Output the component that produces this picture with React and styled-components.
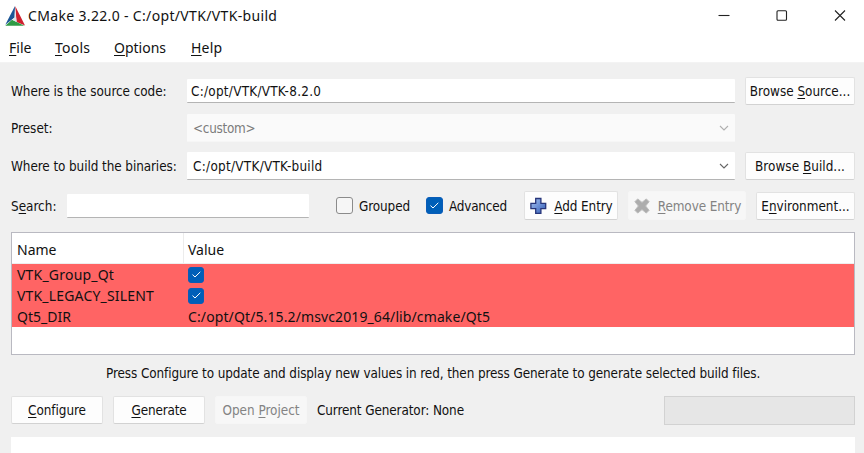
import React from 'react';
import styled, { createGlobalStyle } from 'styled-components';

const Global = createGlobalStyle`
  * { box-sizing: border-box; }
  body { margin: 0; overflow: hidden; background: #f0f0f0; }
`;

const tahoma = '13.4px "DejaVu Sans Condensed", "DejaVu Sans", sans-serif';
const segoe = '14px "Noto Sans", sans-serif';

const Window = styled.div`
  width: 864px;
  height: 453px;
  display: flex;
  flex-direction: column;
  overflow: hidden;
  background: #f0f0f0;
  color: #111;
  font: ${tahoma};
  white-space: nowrap;
`;
const Label = styled.span`
  display: inline-block;
  vertical-align: top;
  padding-top: 2px;
  letter-spacing: ${(p) => p.$ls || 0}px;
  line-height: 18px;
`;
const Mnemonic = styled.span`
  text-decoration: underline;
  text-decoration-thickness: 1px;
  text-underline-offset: 2px;
  text-decoration-skip-ink: none;
`;
const Header = styled.header`
  flex: none;
  height: 63px;
  background: #fff;
  border-bottom: 1px solid #f3f3f3;
  font: ${segoe};
  ${Label} { padding-top: 0; }
`;
const TitleBar = styled.div`
  display: flex;
  align-items: center;
  height: 31px;
  padding-left: 5px;
`;
const Title = styled.div`
  flex: 1;
  display: flex;
  align-items: center;
  gap: 3px;
`;
const WindowButtons = styled.div`
  display: flex;
  width: 169px;
`;
const WindowButton = styled.button`
  flex: none;
  width: 58px;
  height: 30px;
  padding: 0;
  border: 0;
  background: none;
  display: grid;
  place-items: center;
`;
const MenuBar = styled.nav`
  display: flex;
  align-items: center;
  height: 31px;
  padding: 3px 0 0 9px;
`;
const MenuItem = styled.div`
  width: ${(p) => p.$w}px;
`;
const Main = styled.main`
  flex: 1;
  padding: 14px 9px 0 11px;
  display: flex;
  flex-direction: column;
`;
const PathRow = styled.div`
  display: grid;
  grid-template-columns: 176px 548px 110px;
  align-items: center;
  height: 28px;
  margin-bottom: ${(p) => p.$mb}px;
  & > button { margin-left: 10px; }
`;
const Field = styled.div`
  flex: none;
  display: flex;
  align-items: center;
  justify-content: space-between;
  height: ${(p) => p.$h || 28}px;
  width: ${(p) => (p.$w ? p.$w + 'px' : 'auto')};
  padding: 0 6px 0 ${(p) => p.$pl || 7}px;
  background: ${(p) => (p.$disabled ? '#fafafa' : '#fff')};
  border-bottom: 1px solid ${(p) => (p.$disabled ? '#f6f6f6' : '#b4b4b4')};
  border-radius: 1px;
  color: ${(p) => (p.$disabled ? '#7c7c7c' : '#111')};
`;
const SearchField = styled(Field)`
  margin: 1px 27px 0 0;
`;
const Button = styled.button`
  flex: none;
  width: ${(p) => p.$w}px;
  height: ${(p) => p.$h || 28}px;
  display: flex;
  align-items: center;
  justify-content: center;
  gap: ${(p) => p.$gap || 0}px;
  padding: 0;
  border: 1px solid ${(p) => (p.$disabled ? '#f6f6f6' : '#e2e2e2')};
  border-bottom-color: ${(p) => (p.$disabled ? '#f6f6f6' : '#d2d2d2')};
  border-radius: 2px;
  background: ${(p) => (p.$disabled ? '#f7f7f7' : '#fdfdfd')};
  color: ${(p) => (p.$disabled ? '#838383' : '#111')};
  font: inherit;
`;
const SearchRow = styled.div`
  display: flex;
  align-items: center;
  height: 29px;
`;
const SearchLabel = styled.div`
  width: 56px;
`;
const Option = styled.label`
  display: flex;
  align-items: center;
  gap: 6px;
  width: ${(p) => p.$w}px;
`;
const Box = styled.span`
  flex: none;
  display: grid;
  place-items: center;
  width: ${(p) => p.$size || 17}px;
  height: ${(p) => p.$size || 17}px;
  border: 1px solid ${(p) => (p.$on ? '#0a5cb8' : '#8b8b8b')};
  border-radius: 3px;
  background: ${(p) => (p.$on ? '#005fb8' : '#f6f6f6')};
`;
const ButtonGroup = styled.div`
  display: flex;
  align-items: flex-end;
  gap: 10px;
`;
const Table = styled.div`
  height: 123px;
  margin-top: 12px;
  border: 1px solid #b9b9c1;
  background: #fff;
  font: ${segoe};
`;
const TableRow = styled.div`
  display: grid;
  grid-template-columns: 171px 1fr;
  align-items: center;
  height: ${(p) => (p.$head ? 31 : 21)}px;
  background: ${(p) => (p.$head ? '#fff' : '#ff6464')};
  border-bottom: ${(p) => (p.$head ? '1px solid #eee' : '0')};
  ${Label} { padding-top: ${(p) => (p.$head ? 4 : 0)}px; }
`;
const Cell = styled.div`
  display: flex;
  align-items: center;
  height: 100%;
  padding-left: 4px;
  border-left: 1px solid ${(p) => (p.$line ? '#ececec' : 'transparent')};
`;
const Hint = styled.p`
  margin: 8px 0 13px;
  padding-left: 95px;
`;
const ActionRow = styled.div`
  display: flex;
  align-items: center;
  gap: 10px;
  height: 28px;
`;
const Progress = styled.div`
  width: 191px;
  height: 29px;
  margin-left: auto;
  background: #e6e6e6;
  border: 1px solid #d2d2d2;
`;
const Output = styled.div`
  height: 30px;
  margin-top: 13px;
  background: #fff;
`;

const Logo = () => (
  <svg width="20" height="20" viewBox="0 0 20 20">
    <path d="M10 0 L0.3 18.8 L9.6 11.4 Z" fill="#1b5596" />
    <path d="M10.2 0 L20 19.4 L11.6 16 Z" fill="#cf2030" />
    <path d="M0.3 19.8 L7 13.8 L19.4 19.8 Z" fill="#2f9a45" />
    <path d="M10 3 L11.6 15.9 L7.2 13.7 L9.6 11.6 Z" fill="#dfe4ea" />
  </svg>
);
const Chevron = ({ color }) => (
  <svg width="10" height="6" viewBox="0 0 10 6" fill="none" stroke={color} strokeWidth="1.1">
    <path d="M1 1 L5 5 L9 1" />
  </svg>
);
const Check = () => (
  <svg width="11" height="9" viewBox="0 0 11 9" fill="none" stroke="#fff" strokeWidth="1">
    <path d="M1.5 4.6 L4 7 L9.3 1.8" />
  </svg>
);
const Plus = () => (
  <svg width="18" height="18" viewBox="0 0 18 18">
    <defs>
      <linearGradient id="plus" x1="0" y1="0" x2="1" y2="1">
        <stop offset="0" stopColor="#a9c3ee" />
        <stop offset="0.5" stopColor="#6c90d6" />
        <stop offset="1" stopColor="#3159b0" />
      </linearGradient>
    </defs>
    <path d="M6.7 1.5h5.2v4.9h4.8v5.2h-4.8v4.8H6.7v-4.8H1.9V6.4h4.8z" fill="url(#plus)" stroke="#27357a" strokeWidth="1.3" />
  </svg>
);
const Cross = () => (
  <svg width="18" height="18" viewBox="0 0 18 18">
    <path d="M4.7 1.9 L9 5.4 L13.3 1.9 L16.1 4.7 L12.6 9 L16.1 13.3 L13.3 16.1 L9 12.6 L4.7 16.1 L1.9 13.3 L5.4 9 L1.9 4.7 Z" fill="#adadad" stroke="#bcbcbc" strokeLinejoin="round" />
  </svg>
);
const Glyph = ({ children }) => (
  <svg width="12" height="12" viewBox="0 0 12 12" fill="none" stroke="#222" strokeWidth="1.1">{children}</svg>
);

/* Renders text with the character after "&" underlined. */
const Text = ({ ls, children }) => {
  const i = children.indexOf('&');
  return (
    <Label $ls={ls}>
      {i < 0 ? children : <>{children.slice(0, i)}<Mnemonic>{children[i + 1]}</Mnemonic>{children.slice(i + 2)}</>}
    </Label>
  );
};

export default function App() {
  return (
    <Window>
      <Global />
      <Header>
        <TitleBar>
          <Title><Logo /><Text ls={0.34}>CMake 3.22.0 - C:/opt/VTK/VTK-build</Text></Title>
          <WindowButtons>
            <WindowButton><Glyph><path d="M0.5 5.5h11" /></Glyph></WindowButton>
            <WindowButton><Glyph><rect x="1" y="0.8" width="9.5" height="9.5" rx="1" /></Glyph></WindowButton>
            <WindowButton><Glyph><path d="M1 .5l10 10M11 .5L1 10.5" /></Glyph></WindowButton>
          </WindowButtons>
        </TitleBar>
        <MenuBar>
          <MenuItem $w={46}><Text>&File</Text></MenuItem>
          <MenuItem $w={59}><Text ls={0.25}>&Tools</Text></MenuItem>
          <MenuItem $w={77}><Text>&Options</Text></MenuItem>
          <MenuItem $w={40}><Text ls={0.2}>&Help</Text></MenuItem>
        </MenuBar>
      </Header>
      <Main>
        <PathRow $mb={9}>
          <Text ls={-0.05}>Where is the source code:</Text>
          <Field $h={24} $pl={4}><Text ls={0.26}>C:/opt/VTK/VTK-8.2.0</Text></Field>
          <Button $w={110}><Text>Browse &Source...</Text></Button>
        </PathRow>
        <PathRow $mb={10}>
          <Text>Preset:</Text>
          <Field $disabled $pl={6}><Text ls={-0.28}>{'<custom>'}</Text><Chevron color="#b0b0b0" /></Field>
        </PathRow>
        <PathRow $mb={11}>
          <Text ls={-0.08}>Where to build the binaries:</Text>
          <Field $pl={6}><Text ls={0.28}>C:/opt/VTK/VTK-build</Text><Chevron color="#666" /></Field>
          <Button $w={110}><Text ls={0.03}>Browse &Build...</Text></Button>
        </PathRow>
        <SearchRow>
          <SearchLabel><Text>S&earch:</Text></SearchLabel>
          <SearchField $h={24} $w={242} />
          <Option $w={90}><Box /><Text ls={-0.1}>Grouped</Text></Option>
          <Option $w={98}><Box $on><Check /></Box><Text ls={-0.2}>Advanced</Text></Option>
          <ButtonGroup>
            <Button $w={94} $h={29} $gap={7}><Plus /><Text ls={-0.1}>&Add Entry</Text></Button>
            <Button $w={118} $h={29} $gap={7} $disabled><Cross /><Text ls={-0.1}>&Remove Entry</Text></Button>
            <Button $w={99}><Text>E&nvironment...</Text></Button>
          </ButtonGroup>
        </SearchRow>
        <Table>
          <TableRow $head>
            <Cell><Text>Name</Text></Cell>
            <Cell $line><Text>Value</Text></Cell>
          </TableRow>
          <TableRow>
            <Cell><Text ls={0.2}>VTK_Group_Qt</Text></Cell>
            <Cell><Box $on $size={16}><Check /></Box></Cell>
          </TableRow>
          <TableRow>
            <Cell><Text ls={0.17}>VTK_LEGACY_SILENT</Text></Cell>
            <Cell><Box $on $size={16}><Check /></Box></Cell>
          </TableRow>
          <TableRow>
            <Cell><Text>Qt5_DIR</Text></Cell>
            <Cell><Text ls={0.11}>C:/opt/Qt/5.15.2/msvc2019_64/lib/cmake/Qt5</Text></Cell>
          </TableRow>
        </Table>
        <Hint>
          <Text ls={-0.1}>Press Configure to update and display new values in red, then press Generate to generate selected build files.</Text>
        </Hint>
        <ActionRow>
          <Button $w={92}><Text ls={-0.05}>&Configure</Text></Button>
          <Button $w={92}><Text ls={-0.15}>&Generate</Text></Button>
          <Button $w={92} $disabled><Text>Open &Project</Text></Button>
          <Text ls={-0.1}>Current Generator: None</Text>
          <Progress />
        </ActionRow>
        <Output />
      </Main>
    </Window>
  );
}
